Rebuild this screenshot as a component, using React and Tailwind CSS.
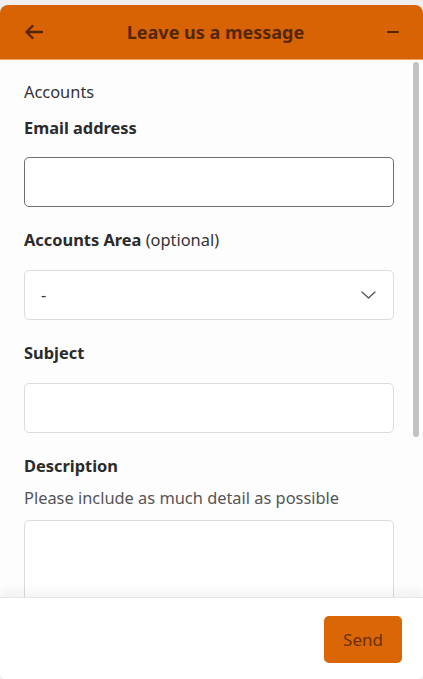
export default function App() {
  return (
    <div className="h-[679px] w-[423px] bg-[#efefef] pt-[5px] font-['Noto_Sans',sans-serif] text-[#2b2b2b]">
      <div className="flex h-[674px] flex-col overflow-hidden rounded-t-[8px] rounded-b-[6px] bg-[#fdfdfd]">
        {/* Header */}
        <div className="flex h-[55px] shrink-0 items-center justify-between border-b border-[#f0a060] bg-[#d86305] px-[24px] text-[#552604]">
          <svg width="20" height="16" viewBox="0 0 20 16" fill="none" stroke="currentColor" strokeWidth="2.4" strokeLinecap="round" strokeLinejoin="round">
            <path d="M18 8H2.5M8.5 2L2.5 8l6 6" />
          </svg>
          <h1 className="text-[18px] font-bold">Leave us a message</h1>
          <div className="h-[2.5px] w-[12px] rounded bg-[#552604]" />
        </div>

        {/* Body */}
        <div className="flex min-h-0 flex-1">
          <div className="min-w-0 flex-1 overflow-hidden pl-[24px] pr-[16px] pt-[20px] text-[16.4px]">
            <p className="leading-6 text-[#333]">Accounts</p>
            <label className="mt-3 block font-bold leading-6">Email address</label>
            <input className="mt-[17px] block h-[50px] w-full rounded-[5px] border border-[#6e6e6e] bg-white px-4" />

            <label className="mt-[21px] block leading-6">
              <span className="font-bold">Accounts Area</span>{" "}
              <span className="text-[#333]">(optional)</span>
            </label>
            <div className="mt-[18px] flex h-[50px] items-center justify-between rounded-[5px] border border-[#dcdcdc] bg-white pl-4 pr-[17px]">
              <span className="text-[#333]">-</span>
              <svg width="15" height="8" viewBox="0 0 15 8" fill="none" stroke="#555" strokeWidth="1.3" strokeLinecap="round" strokeLinejoin="round">
                <path d="M1 1l6.5 6L14 1" />
              </svg>
            </div>

            <label className="mt-[21px] block font-bold leading-6">Subject</label>
            <input className="mt-[18px] block h-[50px] w-full rounded-[5px] border border-[#dcdcdc] bg-white px-4" />

            <label className="mt-[21px] block font-bold leading-6">Description</label>
            <p className="mt-2 leading-6 text-[#555]">Please include as much detail as possible</p>
            <textarea className="mt-[10px] block h-[120px] w-full resize-none rounded-[5px] border border-[#dcdcdc] bg-white px-4" />
          </div>

          {/* Scrollbar */}
          <div className="w-[13px] shrink-0 pl-[3px] pt-[2px]">
            <div className="h-[375px] w-[6px] rounded-full bg-[#c3c3c3]" />
          </div>
        </div>

        {/* Footer */}
        <div className="relative flex h-[82px] shrink-0 items-start justify-end border-t border-[#e6e6e6] bg-white pr-[21px] pt-[18px] shadow-[0_-6px_10px_rgba(0,0,0,0.05)]">
          <button className="h-[47px] w-[78px] rounded-[5px] bg-[#da6606] text-[17px] text-[#6b3008]">Send</button>
        </div>
      </div>
    </div>
  );
}
